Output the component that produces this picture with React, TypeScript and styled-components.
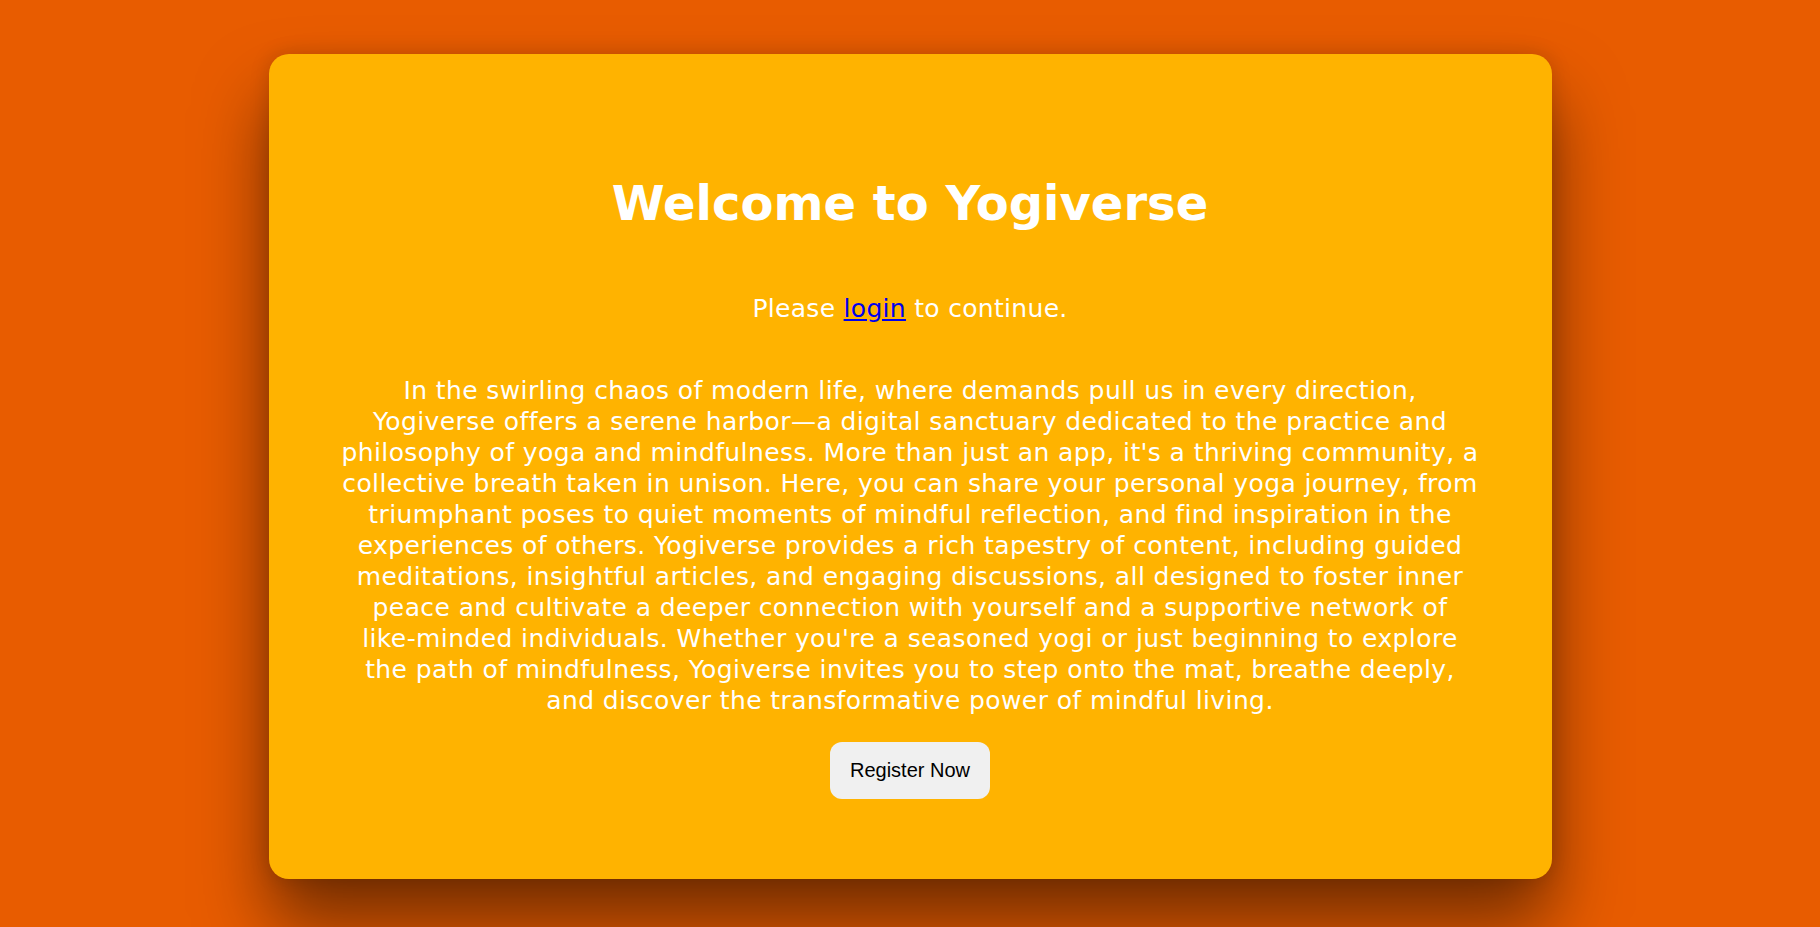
import styled, { createGlobalStyle } from 'styled-components';

const GlobalStyle = createGlobalStyle`
  html, body {
    margin: 0;
    padding: 0;
    background: #e85c00;
  }
  body {
    font-family: "DejaVu Sans", "Open Sans", sans-serif;
  }
`;

export default function App() {
  return (
    <>
      <GlobalStyle />
      <StyledPage>
        <StyledCard>
          <StyledTitle>Welcome to Yogiverse</StyledTitle>
          <StyledLead>
            Please <StyledLink href="#login">login</StyledLink> to continue.
          </StyledLead>
          <StyledText>
            In the swirling chaos of modern life, where demands pull us in every
            direction, Yogiverse offers a serene harbor—a digital sanctuary
            dedicated to the practice and philosophy of yoga and mindfulness.
            More than just an app, it's a thriving community, a collective
            breath taken in unison. Here, you can share your personal yoga
            journey, from triumphant poses to quiet moments of mindful
            reflection, and find inspiration in the experiences of others.
            Yogiverse provides a rich tapestry of content, including guided
            meditations, insightful articles, and engaging discussions, all
            designed to foster inner peace and cultivate a deeper connection
            with yourself and a supportive network of{' '}
            <StyledNoWrap>like-minded</StyledNoWrap> individuals. Whether
            you're a seasoned yogi or just beginning to explore the path of
            mindfulness, Yogiverse invites you to step onto the mat, breathe
            deeply, and discover the transformative power of mindful living.
          </StyledText>
          <StyledButton type="button">Register Now</StyledButton>
        </StyledCard>
      </StyledPage>
    </>
  );
}

const StyledPage = styled.div`
  min-height: 927px;
  box-sizing: border-box;
  padding-top: 54px;
  display: flex;
  justify-content: center;
  align-items: flex-start;
`;

const StyledCard = styled.div`
  width: 1283px;
  box-sizing: border-box;
  padding: 117px 72px 80px;
  background: #ffb300;
  border-radius: 20px;
  box-shadow: 0 45px 70px rgba(0, 0, 0, 0.5), 0 0 20px rgba(0, 0, 0, 0.15);
  display: flex;
  flex-direction: column;
  align-items: center;
  color: #ffffff;
  text-align: center;
`;

const StyledTitle = styled.h1`
  margin: 0;
  font-size: 48px;
  line-height: 64px;
  font-weight: 700;
`;

const StyledLead = styled.p`
  margin: 59px 0 0;
  font-size: 25px;
  line-height: 30px;
  letter-spacing: 0.3px;
`;

const StyledLink = styled.a`
  color: #0000ee;
  text-decoration: underline;
`;

const StyledText = styled.p`
  margin: 51px 0 0;
  font-size: 25px;
  line-height: 31px;
  letter-spacing: 0.4px;
`;

const StyledNoWrap = styled.span`
  white-space: nowrap;
`;

const StyledButton = styled.button`
  margin-top: 26px;
  width: 160px;
  height: 57px;
  border: none;
  border-radius: 12px;
  background: #f0f0f0;
  color: #000000;
  font-family: "Liberation Sans", Arial, sans-serif;
  font-size: 20px;
  cursor: pointer;
`;
